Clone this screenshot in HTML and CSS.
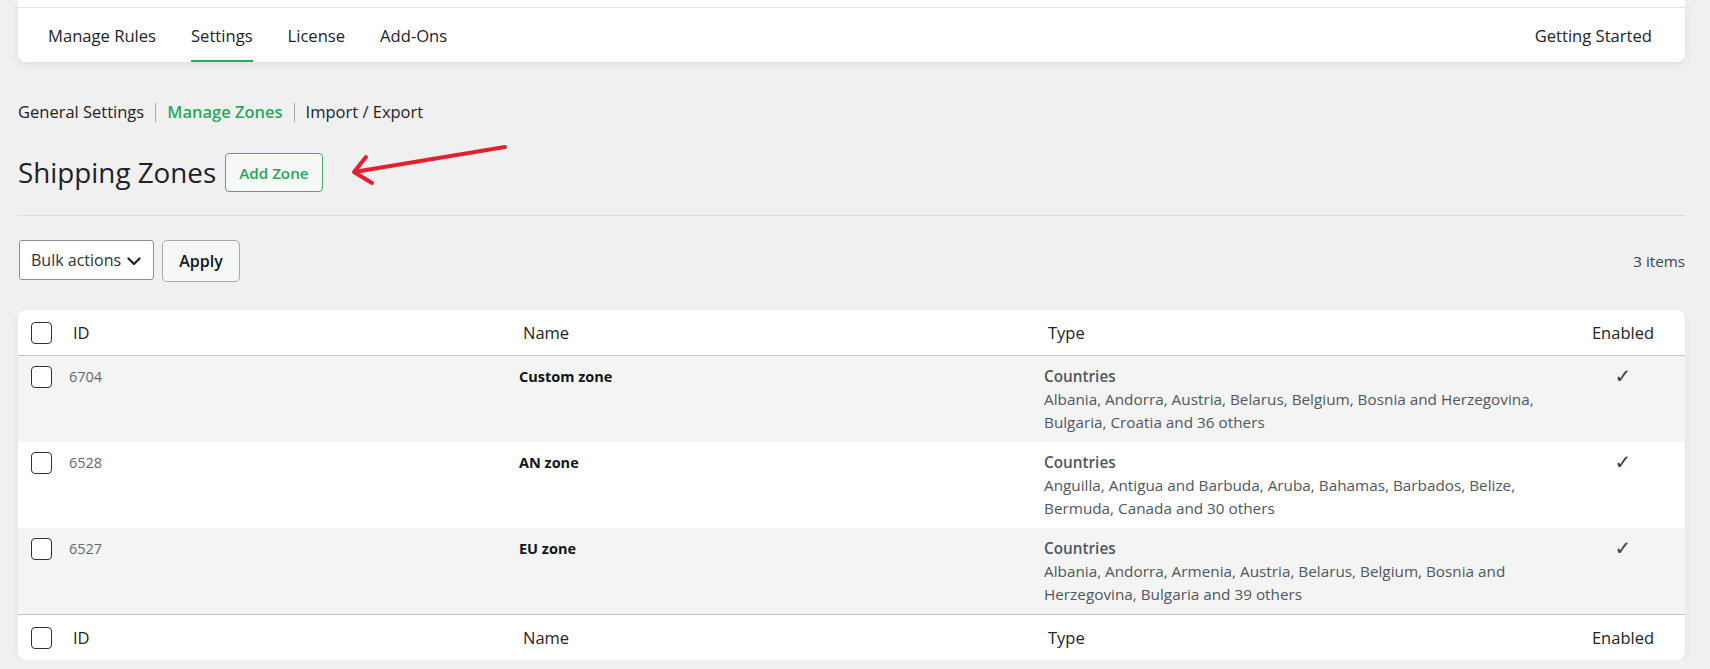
FILE: index.html
```html
<!DOCTYPE html>
<html lang="en">
<head>
<meta charset="utf-8">
<title>Shipping Zones</title>
<link rel="stylesheet" href="styles.css">
</head>
<body>
<header class="topcard">
  <div class="topcard-strip"></div>
  <nav class="tabs">
    <div class="tabs-left">
      <a class="tab" href="#">Manage Rules</a>
      <a class="tab active" href="#">Settings</a>
      <a class="tab" href="#">License</a>
      <a class="tab" href="#">Add-Ons</a>
    </div>
    <a class="tab" href="#">Getting Started</a>
  </nav>
</header>

<main class="page">
  <div class="subnav">
    <a class="sublink" href="#">General Settings</a>
    <span class="sep"></span>
    <a class="sublink current" href="#">Manage Zones</a>
    <span class="sep"></span>
    <a class="sublink" href="#">Import / Export</a>
  </div>

  <div class="title-row">
    <h1 class="title">Shipping Zones</h1>
    <a class="add-btn" href="#">Add Zone</a>
    <svg class="annot-arrow" width="180" height="55" viewBox="0 0 180 55" aria-hidden="true">
      <path d="M165 12 L14 37 M26 22 L14 37 L32 48" fill="none" stroke="#e41f30" stroke-width="4" stroke-linecap="round" stroke-linejoin="round"/>
    </svg>
  </div>

  <div class="divider"></div>

  <div class="toolbar">
    <div class="select">
      <span>Bulk actions</span>
      <svg class="chev" width="14" height="9" viewBox="0 0 14 9" aria-hidden="true"><path d="M1.5 1.5 L7 7 L12.5 1.5" fill="none" stroke="#1d2327" stroke-width="2.2" stroke-linecap="round" stroke-linejoin="round"/></svg>
    </div>
    <button class="apply" type="button">Apply</button>
    <span class="count">3 items</span>
  </div>

  <div class="table-card">
    <table class="zones">
      <colgroup>
        <col class="c-cb"><col class="c-id"><col class="c-name"><col class="c-type"><col class="c-en">
      </colgroup>
      <thead>
        <tr>
          <th class="cb"><span class="box"></span></th>
          <th>ID</th>
          <th>Name</th>
          <th>Type</th>
          <th class="en">Enabled</th>
        </tr>
      </thead>
      <tbody>
        <tr class="alt">
          <td class="cb"><span class="box"></span></td>
          <td class="id">6704</td>
          <td class="name">Custom zone</td>
          <td class="type"><strong>Countries</strong><br>Albania, Andorra, Austria, Belarus, Belgium, Bosnia and Herzegovina, Bulgaria, Croatia and 36 others</td>
          <td class="en check">✓</td>
        </tr>
        <tr>
          <td class="cb"><span class="box"></span></td>
          <td class="id">6528</td>
          <td class="name">AN zone</td>
          <td class="type"><strong>Countries</strong><br>Anguilla, Antigua and Barbuda, Aruba, Bahamas, Barbados, Belize, Bermuda, Canada and 30 others</td>
          <td class="en check">✓</td>
        </tr>
        <tr class="alt">
          <td class="cb"><span class="box"></span></td>
          <td class="id">6527</td>
          <td class="name">EU zone</td>
          <td class="type"><strong>Countries</strong><br>Albania, Andorra, Armenia, Austria, Belarus, Belgium, Bosnia and Herzegovina, Bulgaria and 39 others</td>
          <td class="en check">✓</td>
        </tr>
      </tbody>
      <tfoot>
        <tr>
          <th class="cb"><span class="box"></span></th>
          <th>ID</th>
          <th>Name</th>
          <th>Type</th>
          <th class="en">Enabled</th>
        </tr>
      </tfoot>
    </table>
  </div>
</main>
</body>
</html>
```

FILE: styles.css
```css
* { box-sizing: border-box; }

body {
  margin: 0;
  background: #f0f0f1;
  font-family: "Open Sans", "Noto Sans", sans-serif;
  color: #1d2327;
}

a { text-decoration: none; color: inherit; }

/* top navigation card */
.topcard {
  margin: 0 25px 0 18px;
  background: #fff;
  border-radius: 0 0 8px 8px;
  box-shadow: 0 3px 10px rgba(0, 0, 0, 0.07);
}
.topcard-strip {
  height: 8px;
  border-bottom: 1px solid #e4e4e6;
}
.tabs {
  display: flex;
  justify-content: space-between;
  height: 54px;
  padding: 0 33px 0 30px;
}
.tabs-left {
  display: flex;
  gap: 35px;
}
.tab {
  display: flex;
  align-items: center;
  height: 54px;
  padding-top: 2px;
  border-bottom: 2px solid transparent;
  font-size: 16.6px;
  color: #1d2327;
}
.tab.active { border-bottom-color: #29a85e; }

/* page */
.page {
  padding: 0 25px 0 18px;
}
.subnav {
  margin-top: 38px;
  display: flex;
  align-items: center;
  height: 24px;
  font-size: 16.5px;
  line-height: 24px;
}
.sublink { color: #1d2327; }
.sublink.current { color: #29a85e; font-weight: 600; }
.sep {
  display: inline-block;
  width: 1px;
  height: 19px;
  background: #a7aaad;
  margin: 0 11px;
}

.title-row {
  position: relative;
  margin-top: 29px;
  height: 39px;
  display: flex;
  align-items: center;
  gap: 9px;
}
.title {
  margin: 0;
  font-size: 27.8px;
  font-weight: 400;
  line-height: 39px;
  color: #1d2327;
}
.add-btn {
  display: flex;
  align-items: center;
  height: 39px;
  padding: 0 13px;
  border: 1px solid #3fb46e;
  border-radius: 4px;
  background: #f7f8f7;
  color: #27a55a;
  font-size: 15.2px;
  font-weight: 600;
}
.annot-arrow {
  position: absolute;
  left: 322px;
  top: -18px;
}

.divider {
  margin-top: 23px;
  border-top: 1px solid #dcdcde;
}

.toolbar {
  margin-top: 24px;
  display: flex;
  align-items: flex-start;
  height: 42px;
}
.select {
  margin-left: 1px;
  width: 135px;
  height: 40px;
  display: flex;
  align-items: center;
  gap: 6px;
  padding-left: 11px;
  background: #fff;
  border: 1px solid #8c8f94;
  border-radius: 3px;
  font-size: 16px;
  color: #2c3338;
}
.chev { flex: none; margin-top: 2px; }
.apply {
  margin-left: 8px;
  width: 78px;
  height: 42px;
  border: 1px solid #a7aaad;
  border-radius: 5px;
  background: #f6f7f7;
  font-family: inherit;
  font-size: 16px;
  font-weight: 600;
  color: #101517;
  padding: 0;
}
.count {
  margin-left: auto;
  align-self: center;
  font-size: 15.2px;
  color: #3c434a;
}

/* table */
.table-card {
  margin-top: 28px;
  background: #fff;
  border-radius: 8px;
  overflow: hidden;
  box-shadow: 0 2px 8px rgba(0, 0, 0, 0.06);
}
.zones {
  width: 100%;
  table-layout: fixed;
  border-collapse: separate;
  border-spacing: 0;
}
.c-cb { width: 41px; }
.c-id { width: 450px; }
.c-name { width: 525px; }
.c-type { width: 527px; }

.zones th {
  text-align: left;
  font-weight: 400;
  font-size: 16.5px;
  line-height: 25px;
  padding: 10px 10px 10px 14px;
  color: #1d2327;
}
.zones thead th { border-bottom: 1px solid #c3c4c7; }
.zones tfoot th { border-top: 1px solid #c3c4c7; }
.zones th.cb { padding: 0 0 0 13px; vertical-align: middle; }
.zones th.en, .zones td.en { text-align: center; padding-left: 10px; }

.zones tbody tr { background: #fff; }
.zones tbody tr.alt { background: #f4f4f4; }
.zones td {
  vertical-align: top;
  padding: 9px 10px 8px;
  font-size: 14.5px;
  line-height: 23px;
  color: #50575e;
}
.zones td.cb { padding: 10px 0 0 13px; }
.zones td.id { color: #646970; }
.zones td.name { font-weight: 700; color: #101517; }
.zones td.type { font-size: 15.3px; }
.zones td.type strong { font-weight: 600; color: #50575e; }
.zones td.check {
  font-family: "DejaVu Sans", sans-serif;
  font-size: 20px;
  line-height: 23px;
  color: #3c434a;
}

.box {
  display: block;
  width: 21px;
  height: 22px;
  border: 1.5px solid #2c3338;
  border-radius: 4px;
  background: #fff;
}
```
